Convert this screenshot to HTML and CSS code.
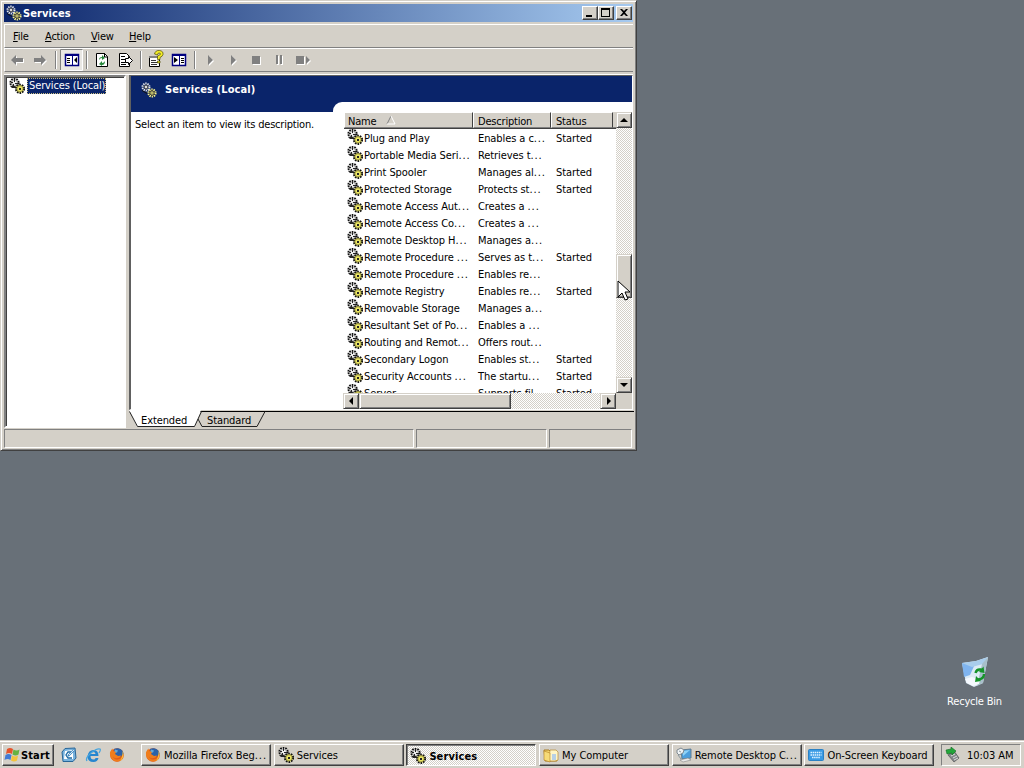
FILE: index.html
```html
<!DOCTYPE html>
<html lang="en">
<head>
<meta charset="utf-8">
<title>Services</title>
<link rel="stylesheet" href="styles.css">
</head>
<body>
<svg class="defs" width="0" height="0">
  <defs>
    <symbol id="gears" viewBox="0 0 16 16">
      <circle cx="5.500" cy="4.800" r="4.100" fill="#e8e8e8" stroke="#111" stroke-width="2" stroke-dasharray="1.600 .98"/>
      <circle cx="5.500" cy="4.800" r="2.900" fill="#eee" stroke="#777" stroke-width=".6"/>
      <path d="M5 1h1v3H5zM2 4h2v1H2zM6 5h3v1H6zM4 6h1v3H4zM1 8h3v1h2v1H3z" fill="#222"/>
      <circle cx="11" cy="10.800" r="4.100" fill="#e8e377" stroke="#111" stroke-width="2" stroke-dasharray="1.600 .98"/>
      <circle cx="11" cy="10.800" r="3" fill="#ece765" stroke="#97923a" stroke-width=".8"/>
      <path d="M10 10h2v2h-2z" fill="#222"/>
    </symbol>
    <symbol id="gears-title" viewBox="0 0 16 16">
      <circle cx="5" cy="5" r="3.400" fill="none" stroke="#e8e8e8" stroke-width="2.200" stroke-dasharray="1.300 .83"/>
      <circle cx="5" cy="5" r="1.900" fill="#ddd" stroke="#222" stroke-width=".8"/>
      <circle cx="11" cy="11" r="3.500" fill="#222" stroke="#f5f18c" stroke-width="2.200" stroke-dasharray="1.300 .9"/>
      <circle cx="11" cy="11" r="2" fill="#f2ee83" stroke="#333" stroke-width=".7"/>
      <path d="M10.500 10.500h1v1h-1zM1 8l5 3v1L1 9z" fill="#111"/>
    </symbol>
    <symbol id="firefox" viewBox="0 0 16 16">
      <circle cx="8" cy="8" r="6.800" fill="#e05a18"/>
      <path d="M5 2c4-2 9 0 9.500 5L11 10 6 8z" fill="#2b62a8"/>
      <path d="M6 2.500l3 1-1 2-3 .5z" fill="#61a8d8"/>
      <path d="M1.200 5C2 3 3 2 3.500 1.500L4 4l3 1-1 2 3 2 3-.6c-1 3-6 4-8 1 1 4 8 5 10-2 1 5-3 7-6 7-5 0-8-5-6.800-10.400z" fill="#ef7d1c"/>
      <path d="M13.600 4c1.700 4 .5 8-2.600 10 2-3 2.600-6 2.600-10z" fill="#f9c13c"/>
    </symbol>
  </defs>
</svg>

<main class="desktop">
  <section class="window">
    <header class="titlebar">
      <svg class="ico"><use href="#gears-title"/></svg>
      <span class="title">Services</span>
      <span class="caps">
        <button class="cap"><svg viewBox="0 0 12 10"><path d="M2 7h6v2H2z"/></svg></button><button class="cap"><svg viewBox="0 0 12 10"><path d="M1 0h9v9H1zM2 2v6h7V2z" fill-rule="evenodd"/></svg></button><button class="cap close"><svg viewBox="0 0 12 10"><path d="M2 1h2l2 2 2-2h2L7 4.500 10 8H8L6 6 4 8H2l3-3.500z"/></svg></button>
      </span>
    </header>
    <nav class="menubar"><span><u>F</u>ile</span><span><u>A</u>ction</span><span><u>V</u>iew</span><span><u>H</u>elp</span></nav>
    <div class="toolbar">
      <svg width="320" height="22" viewBox="0 0 320 22">
        <g fill="#fff"><path d="M7 12l5-5v3h7v4h-7v3zM42 12l-5-5v3h-7v4h7v3z"/></g>
        <g fill="#808080"><path d="M6 11l5-5v3h7v4h-7v3zM41 11l-5-5v3h-7v4h7v3z"/></g>
        <path d="M50 2h1v18h-1zM81 2h1v18h-1zM135 2h1v18h-1zM189 2h1v18h-1z" fill="#808080"/><path d="M51 2h1v18h-1zM82 2h1v18h-1zM136 2h1v18h-1zM190 2h1v18h-1z" fill="#fff"/>
        <path d="M55 0h23v21H55z" fill="#e9e7e3"/><path d="M55.500 21V.5h22" fill="none" stroke="#808080"/><path d="M77.500 1v20.500H55" fill="none" stroke="#fff"/>
        <path d="M60.500 5.500h13v11h-13z" fill="#fff" stroke="#000080" stroke-width="1.500"/><path d="M60 5h14v2H60zM67 7h1v10h-1z" fill="#000080"/><path d="M62 9h3v1h-3zM62 11h3v1h-3zM62 13h3v1h-3zM72 8v6l-3-3z"/>
        <path d="M91.500 4.500h8l3 3v10h-11z" fill="#fff" stroke="#000"/><path d="M99.500 4v4h3" fill="none" stroke="#000"/><path d="M94 11q0-3 3-3V6l3 3-3 2V9q-2 0-3 2zM100 12q0 4-3 4v1l-3-2 3-3v2q2 0 3-2z" fill="#28883c"/>
        <path d="M114.500 4.500h7l3 3v10h-10z" fill="#fff" stroke="#000"/><path d="M116 7.500h4M116 10.500h5M116 13.500h5M116 15.500h5" stroke="#000"/><path d="M120.500 9.500h3v-2l4 4-4 4v-2h-3z" fill="#fff" stroke="#000"/>
        <path d="M144.500 7.500h10v10h-10z" fill="#fff" stroke="#000"/><path d="M144 7h10v2h-10z" fill="#808080"/><path d="M146 11.500h5M146 13.500h7M146 15.500h6" stroke="#333"/><path d="M149.500 5q1-4 5-3.500 4 .5 3.500 4-.5 2-3 3v2h-2.500V7q3-1 3-2t-1.500-1-1.500 2zM152.500 12h2.500v2h-2.500z" fill="#f3ed28" stroke="#4d4b00" stroke-width=".7"/>
        <path d="M167.500 5.500h13v11h-13z" fill="#fff" stroke="#000080" stroke-width="1.500"/><path d="M167 5h14v2h-14zM174 7h1v10h-1z" fill="#000080"/><path d="M176 9h3v1h-3zM176 11h3v1h-3zM176 13h3v1h-3zM169 8v6l4-3z"/>
        <path d="M204 7l5 5-5 5zM227 7l5 5-5 5zM248 8h8v8h-8zM272 7h2v9h-2zM276 7h2v9h-2zM292 8h8v8h-8zM302 8l4 4-4 4z" fill="#fff"/>
        <path d="M203 6l5 5-5 5zM226 6l5 5-5 5zM247 7h8v8h-8zM271 6h2v9h-2zM275 6h2v9h-2zM291 7h8v8h-8zM301 7l4 4-4 4z" fill="#808080"/>
      </svg>
    </div>
    <div class="body">
      <aside class="tree"><svg class="ico"><use href="#gears"/></svg><span class="selected">Services (Local)</span></aside>
      <div class="right">
        <div class="pane">
          <div class="banner"><svg class="ico"><use href="#gears-title"/></svg><b>Services (Local)</b></div>
          <div class="detail">
            <p class="hint">Select an item to view its description.</p>
            <div class="listwrap">
              <div class="list">
                <div class="columns"><span>Name <svg width="10" height="9"><path d="M1 8L5 0" stroke="#808080" fill="none"/><path d="M5 0l4 8H1" stroke="#fff" fill="none"/></svg></span><span>Description</span><span>Status</span><i></i></div>
                <div class="rows" id="rows"></div>
                <div class="hscroll"><div class="sb"><svg viewBox="0 0 12 12"><path d="M8 2v8L4 6z"/></svg></div><div class="thumb"></div><div class="sb end"><svg viewBox="0 0 12 12"><path d="M5 2v8l4-4z"/></svg></div></div>
              </div>
              <div class="vside">
                <div class="vscroll"><div class="sb"><svg viewBox="0 0 12 12"><path d="M2 8h8L6 4z"/></svg></div><div class="thumb"></div><div class="sb end"><svg viewBox="0 0 12 12"><path d="M2 4h8L6 8z"/></svg></div></div>
              </div>
            </div>
          </div>
        </div>
        <div class="tabs">
          <svg width="505" height="18" viewBox="0 0 505 18"><path d="M71 1.500h434" stroke="#000" fill="none"/><path d="M0 0h72l-6 16.500H8z" fill="#fff"/><path d="M.5 1.500l8 15h57l7-15M69 9l4 7.500h55l8-15" stroke="#222" fill="none"/></svg>
          <span class="tab one">Extended</span><span class="tab two">Standard</span>
        </div>
      </div>
    </div>
    <footer class="status"><span></span><span></span><span></span></footer>
  </section>

  <div class="bin">
    <svg width="34" height="36" viewBox="0 0 34 36">
      <path d="M4 7l14-2 12-4-5 26-9 4-8-4z" fill="#dcebf5"/><path d="M4 7l13 1-5 11-6 2z" fill="#7fb4ef"/><path d="M4 7l14-2 12-4-5 7-11 3z" fill="#a9cdec"/><path d="M30 1l-5 26-6 3 5-22z" fill="#a8bfca"/><path d="M7 23l7-2 8 3-1 4-6 2-6-3z" fill="#f6faff"/>
      <g fill="none" stroke="#159329" stroke-width="2.400"><path d="M17.500 17q1-4 5-3.500l2 .5"/><path d="M26 18q0 5-6 5.500"/></g>
      <path d="M25.500 10.500l1 6.500-5.500-1zM18 20l-1 6 6-1z" fill="#159329"/>
    </svg>
    <span>Recycle Bin</span>
  </div>

  <svg class="cursor" width="14" height="22" viewBox="0 0 14 22"><path d="M1 1v16l4-4 3 7 3-1-3-7h5z" fill="#fff" stroke="#000"/></svg>

  <footer class="taskbar">
    <div class="task start"><svg class="ico" viewBox="0 0 16 16"><path d="M3 2q3-2 6 0L8 7Q5 5 2 7z" fill="#e6532b"/><path d="M9.500 2.500q3 2 6 0l-1 5q-3 2-6 0z" fill="#65b241"/><path d="M1.500 8q3-2 6 0l-1 5q-3-2-6 0z" fill="#427bd5"/><path d="M8 8.500q3 2 6 0l-1 5q-3 2-6 0z" fill="#f4c33b"/></svg><b>Start</b></div>
    <div class="quick">
      <svg class="ico" viewBox="0 0 16 16"><path d="M4 1.500l10-.5 1 10-3 3.500H2L1 5z" fill="#78b3de" stroke="#286698"/><path d="M4 4l8-1v9H3z" fill="#fff"/><path d="M10 5H7L5 8l2 3h4" stroke="#1b68a2" stroke-width="1.300" fill="none"/><path d="M7 9l6-6" stroke="#3c86bf" stroke-width="2"/><path d="M8 8l5-5" stroke="#fff" stroke-width=".8"/></svg>
      <svg class="ico" viewBox="0 0 16 16"><path d="M13.500 9H5.500q0 3.500 3 3.500 2 0 2-1.500h3q-1 4-5 4-6 0-6-6 1-6 6-6 5 0 5 6zM5.500 7h5q0-2-2.500-2T5.500 7z" fill="#2786cf" fill-rule="evenodd"/><path d="M2 14Q0 11 6 6t9-4q1 1-1 4" fill="none" stroke="#48a5de" stroke-width="1.300"/></svg>
      <svg class="ico"><use href="#firefox"/></svg>
    </div>
    <div class="tasks">
      <div class="task"><svg class="ico"><use href="#firefox"/></svg><span>Mozilla Firefox Beg<i class="dots">...</i></span></div>
      <div class="task"><svg class="ico"><use href="#gears"/></svg><span>Services</span></div>
      <div class="task active"><svg class="ico"><use href="#gears"/></svg><b>Services</b></div>
      <div class="task"><svg class="ico" viewBox="0 0 16 16"><path d="M1 3h5l2 2h6v9H2z" fill="#f5d66c" stroke="#a87b22"/><path d="M7 3h6l2 2v8l-3 1H6z" fill="#fff5c5" stroke="#b88b32" stroke-width=".7"/><path d="M9 7h4v6H9z" fill="#b8d0e4"/><path d="M1 4l6 2v9l-6-2z" fill="#f7db77" stroke="#b18021" stroke-width=".6"/></svg><span>My Computer</span></div>
      <div class="task"><svg class="ico" viewBox="0 0 16 16"><path d="M5 3l10-1v9L6 12z" fill="#4c9edc" stroke="#627d91"/><path d="M7 4l7-1-7 6z" fill="#8fd2f7"/><path d="M1 3l4-2 3 2-1 3-4 2-2-2z" fill="#f0f3f5" stroke="#7f8a91"/><path d="M3 4l2 1M2 8l3 4" stroke="#8b98a0"/><path d="M4 13l8-2 3 2-8 2z" fill="#e9e9e9" stroke="#777" stroke-width=".5"/></svg><span>Remote Desktop C<i class="dots">...</i></span></div>
      <div class="task"><svg class="ico" viewBox="0 0 16 16"><rect x=".5" y="2.500" width="15" height="11" rx="1" fill="#3a9be5" stroke="#2b81c4"/><path d="M2.500 5.500h11M2.500 8h11M4 10.500h8" stroke="#dff2ff" stroke-width="1.300" stroke-dasharray="1.500 .6"/></svg><span>On-Screen Keyboard</span></div>
    </div>
    <div class="tray"><svg class="ico" viewBox="0 0 16 16"><path d="M3 8l6-4 5 7-5 4z" fill="#85898d" stroke="#444" stroke-width=".6"/><path d="M6 9l4-2M8 11l4-2M9 13l4-2" stroke="#ddd"/><path d="M1 3l5-1V0l5 4-4 4V6L2 7z" fill="#22a63a" stroke="#126a22" stroke-width=".6"/></svg><span>10:03 AM</span></div>
  </footer>
</main>
<script src="app.js"></script>
</body>
</html>
```
FILE: styles.css
```css
* { box-sizing: border-box; }
body { margin: 0; font-family: "DejaVu Sans Condensed", "DejaVu Sans", Tahoma, sans-serif; font-stretch: condensed; font-size: 11px; line-height: 14px; letter-spacing: -.2px; color: #000; overflow: hidden; }
p { margin: 0; }
b { letter-spacing: .12px; }
.defs { display: block; position: absolute; }
.dots { font-style: normal; letter-spacing: .9px; }
.ico { width: 16px; height: 16px; flex: none; display: block; }
.desktop { width: 1024px; height: 768px; background: #687078; display: flex; flex-direction: column; justify-content: space-between; position: relative; }
.window { width: 637px; height: 451px; background: #d4d0c8; padding: 3px 3px 2px 3px; border: 1px solid; border-color: #d4d0c8 #404040 #404040 #d4d0c8; box-shadow: inset 1px 1px #fff, inset -1px -1px #808080; display: flex; flex-direction: column; }
.titlebar { height: 18px; flex: none; display: flex; align-items: center; padding: 0 1px 0 2px; background: linear-gradient(90deg, #0a246a, #a6caf0); color: #fff; font-weight: bold; }
.titlebar .title { margin-left: 1px; padding-top: 1px; flex: 1; letter-spacing: .1px; }
.caps { display: flex; }
.cap { width: 16px; height: 14px; padding: 1px; margin: 0; display: flex; background: #d4d0c8; border: 1px solid; border-color: #fff #404040 #404040 #fff; box-shadow: inset -1px -1px #808080; border-radius: 0; }
.cap svg { width: 12px; height: 10px; }
.cap.close { margin-left: 2px; }
.menubar { height: 24px; margin-top: 2px; flex: none; border: solid; border-width: 1px 0 1px 1px; border-color: #fff #808080 #808080 #fff; display: flex; padding: 5px 0 0 8px; }
.menubar span:nth-child(1) { width: 32px; }
.menubar span:nth-child(2) { width: 46px; }
.menubar span:nth-child(3) { width: 38px; }
.menubar u { text-underline-offset: 1px; }
.toolbar { height: 24px; flex: none; border: solid; border-width: 1px 0 1px 1px; border-color: #fff #808080 #808080 #fff; }
.toolbar svg { display: block; }
.body { height: 354px; margin-top: 2px; flex: none; display: flex; gap: 3px; border-top: 1px solid #fff; }
.tree { width: 122px; height: 353px; background: #fff; border: 2px solid; border-color: #808080 #fff #fff #808080; box-shadow: inset 1px 1px #404040; display: flex; padding: 1px 0 0 3px; align-items: flex-start; }
.selected { background: #0a246a; color: #fff; outline: 1px dotted #c8bc80; outline-offset: -1px; height: 16px; width: 79px; padding: 1px 2px 0; margin-left: 2px; white-space: nowrap; letter-spacing: -.12px; }
.right { width: 504px; display: flex; flex-direction: column; }
.pane { height: 335px; background: #fff; border: solid; border-width: 1px 1px 1px 2px; border-color: #606060 #fff #fff #606060; display: flex; flex-direction: column; }
.banner { height: 26px; background: #0a246a; color: #fff; display: flex; align-items: center; padding: 2px 0 0 10px; flex: none; }
.banner b { margin-left: 8px; }
.detail { flex: 1; display: flex; background: linear-gradient(#0a246a, #0a246a) 0 0 / 212px 10px no-repeat; }
.hint { width: 202px; flex: none; padding: 16px 0 0 4px; white-space: nowrap; }
.listwrap { flex: 1; padding: 10px 0 0 10px; background: #fff; border-radius: 9px 0 0 0; display: flex; }
.list { width: 273px; flex: none; display: flex; flex-direction: column; }
.columns { height: 17px; flex: none; display: flex; background: #d4d0c8; border-bottom: 1px solid #404040; box-shadow: inset 0 -1px #808080; margin-left: 1px; }
.columns span { border: 1px solid; border-color: #fff #404040 #808080 #fff; padding: 2px 0 0 3px; white-space: nowrap; line-height: 13px; height: 16px; }
.columns span:nth-child(1) { width: 129px; }
.columns span:nth-child(2) { width: 78px; padding-left: 4px; }
.columns span:nth-child(3) { width: 62px; padding-left: 4px; }
.columns svg { margin-left: 7px; }
.rows { height: 264px; overflow: hidden; flex: none; letter-spacing: -.08px; }
.row { height: 17px; display: flex; padding-left: 4px; line-height: 20px; white-space: nowrap; }
.row span { height: 17px; }
.row span:nth-of-type(1) { width: 115px; padding-left: 1px; }
.row span:nth-of-type(2) { width: 78px; }
.hscroll, .vscroll { background: repeating-conic-gradient(#fff 0 25%, #d4d0c8 0 50%) 0 0 / 2px 2px; display: flex; }
.hscroll { height: 16px; }
.vside { width: 16px; height: 297px; background: #d4d0c8; }
.vscroll { width: 16px; height: 281px; flex-direction: column; }
.sb, .thumb { width: 16px; height: 16px; flex: none; background: #d4d0c8; border: 1px solid; border-color: #d4d0c8 #404040 #404040 #d4d0c8; box-shadow: inset 1px 1px #fff, inset -1px -1px #808080; }
.sb { padding: 1px; }
.sb svg { width: 12px; height: 12px; display: block; }
.hscroll .thumb { width: 152px; }
.hscroll .end { margin-left: auto; }
.vscroll .thumb { height: 44px; margin-top: 126px; }
.vscroll .end { margin-top: auto; }
.tabs { height: 18px; display: grid; grid-template-columns: 67px 1fr; }
.tabs svg { grid-area: 1 / 1 / 2 / 3; display: block; }
.tab { z-index: 1; padding-top: 4px; letter-spacing: -.1px; }
.tab.one { grid-area: 1 / 1; padding-left: 12px; }
.tab.two { grid-area: 1 / 2; padding-left: 11px; }
.status { height: 19px; margin-top: 1px; flex: none; display: flex; gap: 2px; }
.status span { border: 1px solid; border-color: #808080 #fff #fff #808080; width: 410px; }
.status span:nth-child(2) { width: 131px; }
.status span:nth-child(3) { width: 83px; }
.bin { position: absolute; left: 940px; top: 656px; width: 69px; display: flex; flex-direction: column; align-items: center; color: #fff; gap: 3px; white-space: nowrap; }
.cursor { position: absolute; left: 617px; top: 280px; }
.taskbar { height: 28px; background: #d4d0c8; box-shadow: inset 0 1px #d4d0c8, inset 0 2px #fff; padding: 4px 3px 2px 2px; display: flex; }
.task { height: 22px; display: flex; align-items: center; background: #d4d0c8; border: 1px solid; border-color: #fff #404040 #404040 #fff; box-shadow: inset -1px -1px #808080; padding-left: 3px; gap: 3px; white-space: nowrap; overflow: hidden; letter-spacing: -.07px; }
.task > span, .task > b { padding-top: 1px; }
.start { width: 52px; padding-left: 1px; gap: 1px; }
.quick { display: flex; align-items: center; gap: 8px; margin-left: 7px; width: 80px; }
.tasks { display: grid; grid-template-columns: repeat(6, 130px); gap: 2.7px; }
.active { border-color: #404040 #fff #fff #404040; box-shadow: inset 1px 1px #808080; background: repeating-conic-gradient(#fff 0 25%, #d4d0c8 0 50%) 0 0 / 2px 2px; padding-top: 2px; }
.tray { margin-left: auto; width: 80px; border: 1px solid; border-color: #808080 #fff #fff #808080; display: flex; align-items: center; gap: 6px; padding-left: 3px; white-space: nowrap; letter-spacing: -.05px; }
.tray span { padding-top: 2px; }
```
FILE: app.js
```js
const services = [
  ["Plug and Play", "Enables a c...", "Started"],
  ["Portable Media Seri...", "Retrieves t...", ""],
  ["Print Spooler", "Manages al...", "Started"],
  ["Protected Storage", "Protects st...", "Started"],
  ["Remote Access Aut...", "Creates a ...", ""],
  ["Remote Access Co...", "Creates a ...", ""],
  ["Remote Desktop H...", "Manages a...", ""],
  ["Remote Procedure ...", "Serves as t...", "Started"],
  ["Remote Procedure ...", "Enables re...", ""],
  ["Remote Registry", "Enables re...", "Started"],
  ["Removable Storage", "Manages a...", ""],
  ["Resultant Set of Po...", "Enables a ...", ""],
  ["Routing and Remot...", "Offers rout...", ""],
  ["Secondary Logon", "Enables st...", "Started"],
  ["Security Accounts ...", "The startu...", "Started"],
  ["Server", "Supports fil...", "Started"]
];
const label = text => text.replace("...", '<i class="dots">...</i>');
document.getElementById("rows").innerHTML = services.map(([name, description, status]) =>
  `<div class="row"><svg class="ico"><use href="#gears"/></svg><span>${label(name)}</span><span>${label(description)}</span><span>${status}</span></div>`
).join("");
```
